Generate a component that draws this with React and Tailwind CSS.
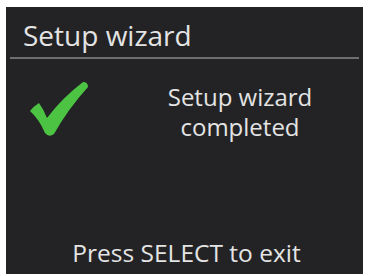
import React from "react";

function Check() {
  return (
    <svg width="62" height="60" viewBox="0 0 62 60" className="absolute left-[21px] top-[71px]">
      <path
        d="M3 33 Q7 28 12 25 Q17 32 20 40 Q35 20 56 4 Q61 4 61 9 Q41 31 27 56 Q22 60 18 55 Q12 41 3 33 Z"
        fill="#4cc343"
      />
    </svg>
  );
}

export default function App() {
  return (
    <div className="w-[368px] h-[276px] bg-white pt-[7px] pl-[6px]" style={{ fontFamily: '"Open Sans", sans-serif' }}>
      <div className="relative w-[357px] h-[267px] bg-[#232325] flex flex-col">
        <div className="h-[50px] pl-[17px] pt-[6px] text-[28px] leading-[44px] text-[#e4e4e4]">Setup wizard</div>
        <div className="mx-[4px] h-[2px] bg-[#6e6e70]" />
        <Check />
        <div className="flex justify-end pr-[48px] pt-[23px]">
          <div className="text-center text-[24px] leading-[30px] text-[#e4e4e4] w-[150px]">
            Setup wizard<br />completed
          </div>
        </div>
        <div className="mt-auto pb-[6px] text-center text-[24.5px] leading-[30px] text-[#e4e4e4] pl-[4px]">Press SELECT to exit</div>
      </div>
    </div>
  );
}
